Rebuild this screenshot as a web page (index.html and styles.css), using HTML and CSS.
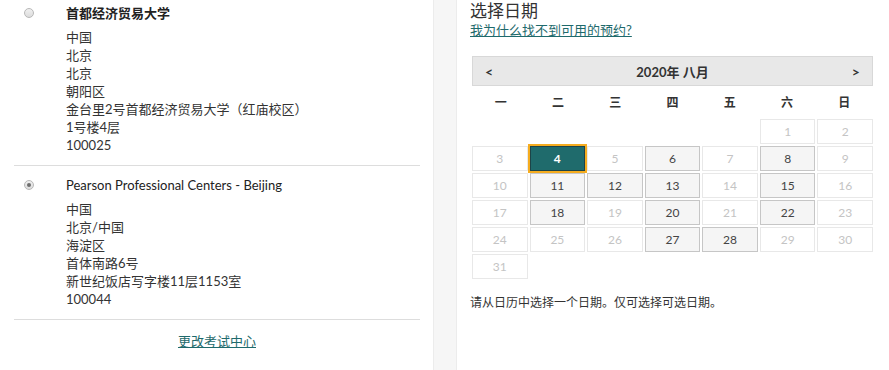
FILE: index.html
```html
<!DOCTYPE html>
<html>
<head>
  <link rel="stylesheet" href="styles.css">
</head>
<body>
  <div class="page">
    <div class="sites">
      <div class="site">
        <div class="site-head">
          <span class="radio"></span>
          <span class="site-name">首都经济贸易大学</span>
        </div>
        <div class="address">
          <div>中国</div>
          <div>北京</div>
          <div>北京</div>
          <div>朝阳区</div>
          <div>金台里2号首都经济贸易大学（红庙校区）</div>
          <div>1号楼4层</div>
          <div>100025</div>
        </div>
      </div>

      <div class="site">
        <div class="site-head">
          <span class="radio checked"></span>
          <span class="site-name latin">Pearson Professional Centers - Beijing</span>
        </div>
        <div class="address">
          <div>中国</div>
          <div>北京/中国</div>
          <div>海淀区</div>
          <div>首体南路6号</div>
          <div>新世纪饭店写字楼11层1153室</div>
          <div>100044</div>
        </div>
      </div>

      <div class="change">
        <a href="#">更改考试中心</a>
      </div>
    </div>

    <div class="picker">
      <h2 class="picker-title">选择日期</h2>
      <a class="help-link" href="#">我为什么找不到可用的预约?</a>

      <div class="calendar">
        <div class="cal-head">
          <span class="cal-nav">&lt;</span>
          <span class="cal-month">2020年 八月</span>
          <span class="cal-nav">&gt;</span>
        </div>

        <div class="cal-days">
          <span>一</span><span>二</span><span>三</span><span>四</span><span>五</span><span>六</span><span>日</span>
        </div>

        <div class="cal-grid">
          <span class="empty"></span><span class="empty"></span><span class="empty"></span><span class="empty"></span><span class="empty"></span>
          <span class="day off">1</span><span class="day off">2</span>

          <span class="day off">3</span><span class="day selected">4</span><span class="day off">5</span><span class="day">6</span><span class="day off">7</span><span class="day">8</span><span class="day off">9</span>

          <span class="day off">10</span><span class="day">11</span><span class="day">12</span><span class="day">13</span><span class="day off">14</span><span class="day">15</span><span class="day off">16</span>

          <span class="day off">17</span><span class="day">18</span><span class="day off">19</span><span class="day">20</span><span class="day off">21</span><span class="day">22</span><span class="day off">23</span>

          <span class="day off">24</span><span class="day off">25</span><span class="day off">26</span><span class="day">27</span><span class="day">28</span><span class="day off">29</span><span class="day off">30</span>

          <span class="day off">31</span>
        </div>
      </div>

      <p class="note">请从日历中选择一个日期。仅可选择可选日期。</p>
    </div>
  </div>
</body>
</html>
```

FILE: styles.css
```css
:root {
  --text-color: #333333;
  --link-color: #1e6a6c;
  --line-color: #dddddd;
  --teal: #1f6b6c;
  --orange: #f5ac1f;
}

body {
  margin: 0;
  background: #f6f6f6;
  color: var(--text-color);
  font-family: Lato, "Noto Sans CJK SC", sans-serif;
  font-size: 13px;
}

.page {
  display: flex;
  gap: 22px;
  min-height: 370px;
}

a {
  color: var(--link-color);
  text-decoration: underline;
}

/* Test centre list */
.sites {
  width: 406px;
  padding: 0 13px 0 14px;
  background: white;
  border-right: 1px solid #ececec;
}

.site {
  padding: 10px 0 11px;
  border-bottom: 1px solid var(--line-color);
}

.site:first-child {
  padding-top: 4px;
}

.site-head {
  display: flex;
  align-items: center;
  line-height: 18px;
}

.radio {
  position: relative;
  box-sizing: border-box;
  width: 10px;
  height: 10px;
  margin: 0 32px 0 10px;
  border: 1px solid #b8b8b8;
  border-radius: 50%;
  background: linear-gradient(#f0f0f0, #dcdcdc);
}

.radio.checked:after {
  content: "";
  position: absolute;
  top: 2px;
  left: 2px;
  width: 4px;
  height: 4px;
  border-radius: 50%;
  background: #6e6e6e;
}

.site-name {
  font-weight: 700;
  color: #222;
}

.site-name.latin {
  font-weight: 400;
}

.address {
  margin: 6px 0 0 52px;
  line-height: 18px;
}

.change {
  margin-top: 13px;
  text-align: center;
  line-height: 16px;
}

/* Date picker */
.picker {
  flex: 1;
  padding: 1px 16px 0 13px;
  background: white;
  border-left: 1px solid #ececec;
}

.picker-title {
  margin: 0;
  font-size: 17px;
  font-weight: 400;
  line-height: 20px;
}

.help-link {
  display: inline-block;
  line-height: 18px;
}

.calendar {
  margin: 17px 0 0 2px;
}

.cal-head {
  display: flex;
  align-items: center;
  justify-content: space-between;
  height: 28px;
  padding: 0 12px;
  background: #e8e8e8;
  border: 1px solid #d8d8d8;
  font-weight: 700;
}

.cal-nav {
  font-size: 14px;
}

.cal-days {
  display: grid;
  grid-template-columns: repeat(7, 1fr);
  height: 31px;
  align-items: center;
  text-align: center;
  font-size: 12px;
  font-weight: 700;
}

.cal-grid {
  display: grid;
  grid-template-columns: repeat(7, 1fr);
  gap: 2px;
  margin-top: 2px;
}

.day {
  display: flex;
  align-items: center;
  justify-content: center;
  height: 23px;
  background: #f5f5f5;
  border: 1px solid #c6c6c6;
  font-size: 12px;
  color: #444;
}

.day.off {
  background: white;
  border-color: #e8e8e8;
  color: #c4c4c4;
}

.day.selected {
  background: var(--teal);
  border-color: #1d4448;
  outline: 2px solid var(--orange);
  color: white;
  font-weight: 700;
}

.note {
  margin: 15px 0 0;
  font-size: 12px;
  line-height: 18px;
}
```
